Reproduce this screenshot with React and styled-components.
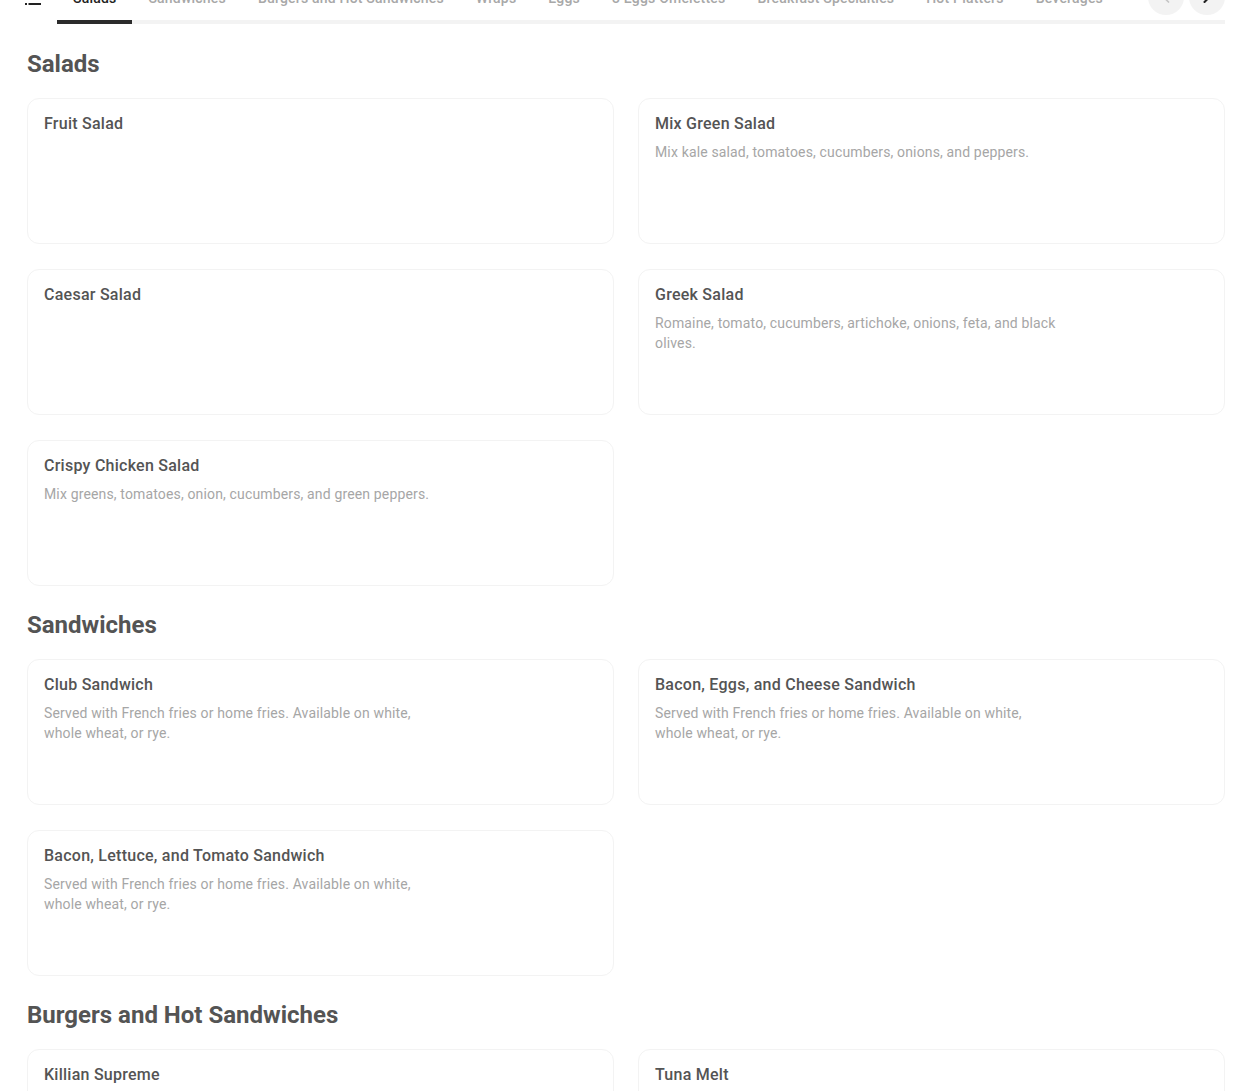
import React from 'react';
import styled, {createGlobalStyle} from 'styled-components';
import {ChevronLeft, ChevronRight} from 'lucide-react';

const tabs = [
    'Salads',
    'Sandwiches',
    'Burgers and Hot Sandwiches',
    'Wraps',
    'Eggs',
    '3 Eggs Omelettes',
    'Breakfast Specialties',
    'Hot Platters',
    'Beverages',
];

const bread = 'Served with French fries or home fries. Available on white, whole wheat, or rye.';

const sections = [
    {
        title: 'Salads',
        items: [
            {name: 'Fruit Salad'},
            {name: 'Mix Green Salad', desc: 'Mix kale salad, tomatoes, cucumbers, onions, and peppers.'},
            {name: 'Caesar Salad'},
            {name: 'Greek Salad', desc: 'Romaine, tomato, cucumbers, artichoke, onions, feta, and black olives.'},
            {name: 'Crispy Chicken Salad', desc: 'Mix greens, tomatoes, onion, cucumbers, and green peppers.'},
        ],
    },
    {
        title: 'Sandwiches',
        items: [
            {name: 'Club Sandwich', desc: bread},
            {name: 'Bacon, Eggs, and Cheese Sandwich', desc: bread},
            {name: 'Bacon, Lettuce, and Tomato Sandwich', desc: bread},
        ],
    },
    {
        title: 'Burgers and Hot Sandwiches',
        items: [
            {name: 'Killian Supreme'},
            {name: 'Tuna Melt'},
        ],
    },
];

function MenuIcon() {
    return (
        <svg width="16" height="16" viewBox="0 0 16 16" fill="#222">
            <rect x="0" y="1" width="2" height="2" />
            <rect x="3.5" y="1" width="12.5" height="2" />
            <rect x="0" y="6" width="2" height="2" />
            <rect x="3.5" y="6" width="12.5" height="2" />
            <rect x="0" y="11" width="2" height="2" />
            <rect x="3.5" y="11" width="12.5" height="2" />
        </svg>
    );
}

function App() {
    return (
        <>
            <GlobalStyle />
            <Header>
                <MenuButton><MenuIcon /></MenuButton>
                <TabRail>
                    <TabList>
                        {tabs.map((t, i) => (
                            <Tab key={t} $active={i === 0}>{t}</Tab>
                        ))}
                    </TabList>
                    <Arrows>
                        <Arrow $disabled><ChevronLeft size={20} strokeWidth={2} /></Arrow>
                        <Arrow><ChevronRight size={20} strokeWidth={2.5} /></Arrow>
                    </Arrows>
                </TabRail>
            </Header>
            <Page>
                {sections.map((s) => (
                    <Section key={s.title}>
                        <SectionTitle>{s.title}</SectionTitle>
                        <Grid>
                            {s.items.map((item) => (
                                <Card key={item.name}>
                                    <ItemName>{item.name}</ItemName>
                                    {item.desc && <ItemDesc>{item.desc}</ItemDesc>}
                                </Card>
                            ))}
                        </Grid>
                    </Section>
                ))}
            </Page>
        </>
    );
}

const GlobalStyle = createGlobalStyle`
    body {
        margin: 0;
        background: #fff;
        font-family: Roboto, "Liberation Sans", sans-serif;
        overflow: hidden;
    }
    * { box-sizing: border-box; }
`;

const Header = styled.div`
    display: flex;
    align-items: center;
    height: 48px;
    margin-top: -24px;
    padding: 0 25px;
    gap: 16px;
`;

const MenuButton = styled.div`
    display: flex;
    width: 16px;
    height: 16px;
`;

const TabRail = styled.div`
    flex: 1;
    min-width: 0;
    height: 48px;
    display: flex;
    box-shadow: inset 0 -4px 0 #f3f3f3;
`;

const TabList = styled.div`
    flex: 1;
    min-width: 0;
    display: flex;
    overflow: hidden;
`;

const Tab = styled.div`
    flex: none;
    padding: 12px 16px 12px;
    line-height: 20px;
    font-size: 14px;
    font-weight: 500;
    letter-spacing: 0.2px;
    white-space: nowrap;
    color: ${(p) => (p.$active ? '#222' : '#a8a8a8')};
    border-bottom: 4px solid ${(p) => (p.$active ? '#2b2b2b' : 'transparent')};
`;

const Arrows = styled.div`
    display: flex;
    gap: 5px;
    margin-left: 16px;
    padding-top: 3px;
`;

const Arrow = styled.div`
    width: 36px;
    height: 36px;
    border-radius: 50%;
    background: #f3f3f3;
    display: flex;
    align-items: center;
    justify-content: center;
    color: ${(p) => (p.$disabled ? '#c4c4c4' : '#222')};
`;

const Page = styled.div`
    padding: 24px 25px 0 27px;
    display: flex;
    flex-direction: column;
    gap: 23px;
`;

const Section = styled.section`
    display: flex;
    flex-direction: column;
    gap: 18px;
`;

const SectionTitle = styled.h2`
    margin: 0;
    padding-top: 1px;
    font-size: 24px;
    line-height: 31px;
    font-weight: 700;
    color: #545454;
`;

const Grid = styled.div`
    display: grid;
    grid-template-columns: 1fr 1fr;
    gap: 25px 24px;
`;

const Card = styled.div`
    height: 146px;
    border: 1px solid #f3f3f3;
    border-radius: 12px;
    padding: 15px 16px;
    background: #fff;
`;

const ItemName = styled.div`
    font-size: 16px;
    line-height: 20px;
    font-weight: 500;
    letter-spacing: 0.25px;
    color: #545454;
`;

const ItemDesc = styled.div`
    margin-top: 8px;
    max-width: 404px;
    font-size: 14px;
    line-height: 20px;
    letter-spacing: 0.15px;
    color: #a6a6a6;
`;

export default App;
